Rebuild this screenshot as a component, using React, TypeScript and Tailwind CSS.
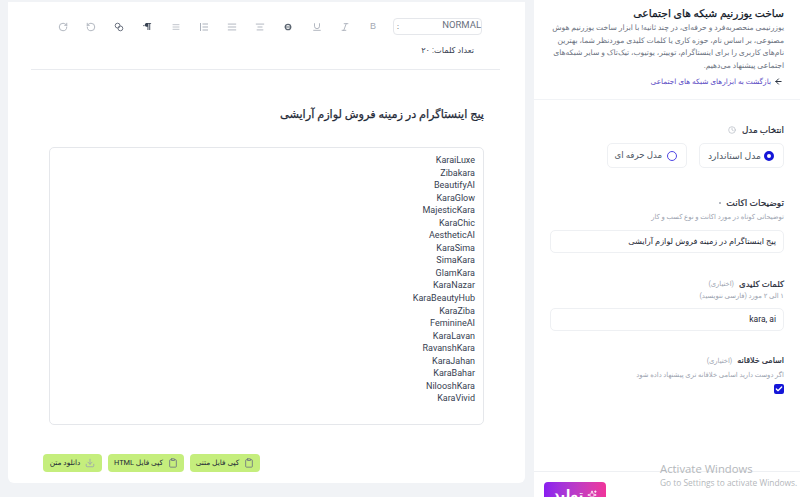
import React from "react";
import { ArrowLeft, Check, Clipboard, Download, Italic, AlignJustify, AlignCenter, RotateCcw, RotateCw, Sparkles, Underline, Clock } from "lucide-react";

const names = ["KaraiLuxe","Zibakara","BeautifyAI","KaraGlow","MajesticKara","KaraChic","AestheticAI","KaraSima","SimaKara","GlamKara","KaraNazar","KaraBeautyHub","KaraZiba","FeminineAI","KaraLavan","RavanshKara","KaraJahan","KaraBahar","NilooshKara","KaraVivid"];

function Tool({ children }: { children: React.ReactNode }) {
  return <span className="flex h-4 w-[28.2px] items-center justify-center text-[#a3a9b4]">{children}</span>;
}

function ActionBtn({ icon, label, w }: { icon: React.ReactNode; label: string; w: string }) {
  return (
    <button className={`flex h-[18px] items-center justify-center gap-[5px] rounded-[4px] bg-[#c5ee7d] text-[7.4px] text-[#1f2937] ${w}`}>
      {icon}
      <span>{label}</span>
    </button>
  );
}

export default function App() {
  return (
    <div dir="rtl" className="relative flex h-[497px] w-[800px] gap-[9px] overflow-hidden bg-[#f1f3f6] font-['Roboto','DejaVu_Sans',sans-serif] text-[#1f2937]">
      <aside className="flex h-[497px] w-[266px] shrink-0 flex-col bg-white">
        <div className="h-[100px] shrink-0 border-b border-[#f1f3f6] px-4 pt-[7px]">
          <h1 className="text-[10.7px] leading-[14px] text-[#111827] [-webkit-text-stroke:0.25px]">ساخت یوزرنیم شبکه های اجتماعی</h1>
          <p className="mt-[1px] text-[7.6px] leading-[12.5px] text-[#6b7280]">یوزرنیمی منحصربه‌فرد و حرفه‌ای، در چند ثانیه! با ابزار ساخت یوزرنیم هوش مصنوعی، بر اساس نام، حوزه کاری یا کلمات کلیدی موردنظر شما، بهترین نام‌های کاربری را برای اینستاگرام، توییتر، یوتیوب، تیک‌تاک و سایر شبکه‌های اجتماعی پیشنهاد می‌دهیم.</p>
          <div className="mt-[4px] flex items-center gap-[3px] pr-[1px] text-[7.4px] text-[#5b4bc4]">
            <ArrowLeft className="h-[9px] w-[9px] text-[#1f2937]" strokeWidth={2.5} />
            <span>بازگشت به ابزارهای شبکه های اجتماعی</span>
          </div>
        </div>

        <div className="flex-1 px-4 pt-[24px]">
          <div className="flex items-center gap-[6px] text-[8.8px] leading-[12px] [-webkit-text-stroke:0.2px]">
            <span>انتخاب مدل</span>
            <Clock className="h-[8px] w-[8px] text-[#b4b9c2]" />
          </div>
          <div className="mt-[7px] flex gap-[12px]">
            <div className="flex h-[25px] w-[85px] items-center gap-[3px] rounded-[5px] border border-[#eef0f3] pr-[9px] text-[9.2px] text-[#4b5563]">
              <span className="h-[10px] w-[10px] rounded-full border-[3px] border-[#1416d8] bg-white" />
              <span>مدل استاندارد</span>
            </div>
            <div className="flex h-[25px] w-[80px] items-center gap-[5px] rounded-[5px] border border-[#eef0f3] pr-[9px] text-[8.6px] text-[#4b5563]">
              <span className="h-[10px] w-[10px] rounded-full border border-[#4f46e5] bg-white" />
              <span>مدل حرفه ای</span>
            </div>
          </div>

          <div className="mt-[29px] flex items-center gap-[5px] text-[9px] leading-[12px] [-webkit-text-stroke:0.2px]">
            <span>توضیحات اکانت</span>
            <span className="h-[2px] w-[2px] rounded-full bg-[#9ca3af]" />
          </div>
          <p className="mt-[3px] text-[6.8px] leading-[11px] text-[#9ca3af]">توضیحاتی کوتاه در مورد اکانت و نوع کسب و کار</p>
          <div className="mt-[7px] flex h-[23px] items-center rounded-[5px] border border-[#eef0f3] pr-[7px] text-[8.2px]">پیج اینستاگرام در زمینه فروش لوازم آرایشی</div>

          <div className="mt-[25px] flex items-center gap-[5px] leading-[12px]">
            <span className="text-[8.5px] [-webkit-text-stroke:0.2px]">کلمات کلیدی</span>
            <span className="text-[6.8px] text-[#9ca3af]">(اختیاری)</span>
          </div>
          <p className="mt-[1px] text-[6.8px] leading-[11px] text-[#9ca3af]">۱ الی ۲ مورد (فارسی ننویسید)</p>
          <div className="mt-[6px] flex h-[23px] items-center rounded-[5px] border border-[#eef0f3] pr-[7px] text-[8.5px]">kara, ai</div>

          <div className="mt-[24px] flex items-center gap-[5px] leading-[12px]">
            <span className="text-[8px] [-webkit-text-stroke:0.2px]">اسامی خلاقانه</span>
            <span className="text-[6.8px] text-[#9ca3af]">(اختیاری)</span>
          </div>
          <p className="mt-[3px] text-[6.8px] leading-[11px] text-[#9ca3af]">اگر دوست دارید اسامی خلاقانه تری پیشنهاد داده شود</p>
          <span className="mt-[3px] flex h-[10px] w-[10px] items-center justify-center rounded-[2px] bg-[#1416d8]">
            <Check className="h-[8px] w-[8px] text-white" strokeWidth={4} />
          </span>
        </div>

        <div className="flex h-[26px] shrink-0 items-start justify-end border-t border-[#eef0f3] pt-[10px] pl-[10px]">
          <button className="flex h-[26px] w-[62px] items-center justify-center gap-[4px] rounded-[4px] bg-gradient-to-l from-[#f0349a] to-[#8a1cf0] text-[13px] font-bold text-white">
            <Sparkles className="h-[10px] w-[10px]" />
            <span>تولید</span>
          </button>
        </div>
      </aside>

      <main className="mt-[2px] flex h-[481px] w-[517px] shrink-0 flex-col rounded-b-[6px] bg-white pr-[25px] pl-[23px]">
        <div className="border-b border-[#e9ebef] pb-[13px] pt-[16px]">
          <div className="flex items-center pr-[18px]">
            <div className="flex h-[17px] w-[89px] items-start justify-between rounded-[4px] border border-[#e5e7eb] pl-[3px] leading-[12px] text-[#6b7280]" dir="ltr">
              <span className="self-end pb-[1px] text-[8px] text-[#374151]">:</span>
              <span className="text-[9.5px]">NORMAL</span>
            </div>
            <div className="mr-[6px] flex flex-1 items-center">
              <Tool><span className="font-['Liberation_Sans'] text-[9px]">B</span></Tool>
              <Tool><Italic className="h-[10px] w-[10px]" /></Tool>
              <Tool><Underline className="h-[10px] w-[10px]" /></Tool>
              <Tool>
                <svg viewBox="0 0 10 10" className="h-[8px] w-[8px] text-[#5b6470]" fill="none" stroke="currentColor">
                  <circle cx="5" cy="5" r="3.4" strokeWidth="1.6" />
                  <path d="M1 5h8" strokeWidth="1.2" />
                </svg>
              </Tool>
              <Tool><AlignCenter className="h-[10px] w-[10px]" /></Tool>
              <Tool><AlignJustify className="h-[10px] w-[10px]" /></Tool>
              <Tool>
                <svg viewBox="0 0 10 10" className="h-[10px] w-[10px]" fill="none" stroke="currentColor" strokeWidth="0.9">
                  <path d="M1.5 1v8M3.5 2h5.5M3.5 5h5.5M3.5 8h5.5" />
                </svg>
              </Tool>
              <Tool><AlignJustify className="h-[8px] w-[8px]" /></Tool>
              <Tool>
                <svg viewBox="0 0 10 10" className="h-[9px] w-[9px] text-[#374151]" fill="currentColor">
                  <circle cx="1" cy="4" r="0.8" />
                  <path d="M3.5 1h5.5v1H8v7H7V2H6v7H5V5.2A2.2 2.2 0 0 1 3.5 1z" />
                </svg>
              </Tool>
              <Tool>
                <svg viewBox="0 0 10 10" className="h-[10px] w-[10px] text-[#6b7280]" fill="none" stroke="currentColor" strokeWidth="1">
                  <circle cx="3.6" cy="3.6" r="2.4" />
                  <circle cx="6.4" cy="6.4" r="2.4" />
                </svg>
              </Tool>
              <Tool><RotateCcw className="h-[10px] w-[10px]" /></Tool>
              <Tool><RotateCw className="h-[10px] w-[10px]" /></Tool>
            </div>
          </div>
          <div className="mt-[9px] pr-[26px] text-[8.2px] leading-[12px] text-[#374151]">تعداد کلمات: ۲۰</div>
        </div>

        <h2 className="mt-[36px] mr-[16px] text-[11.3px] leading-[18px] text-[#1f2937] [-webkit-text-stroke:0.25px]">پیج اینستاگرام در زمینه فروش لوازم آرایشی</h2>

        <div className="mt-[23px] mr-[16px] ml-[18px] h-[278px] rounded-[5px] border border-[#e5e7eb] pt-[6px] pr-[8px] text-[9px] leading-[12.55px] text-[#374151]">
          {names.map((n) => <div key={n} dir="ltr" className="text-right">{n}</div>)}
        </div>

        <div className="mt-[29px] ml-[12px] flex justify-end">
          <div className="flex gap-[6px]">
            <ActionBtn w="w-[70px]" icon={<Clipboard className="h-[10px] w-[10px] text-[#6b7280]" />} label="کپی فایل متنی" />
            <ActionBtn w="w-[76px]" icon={<Clipboard className="h-[10px] w-[10px] text-[#6b7280]" />} label="کپی فایل HTML" />
            <ActionBtn w="w-[59px]" icon={<Download className="h-[10px] w-[10px] text-[#9ca3af]" />} label="دانلود متن" />
          </div>
        </div>
      </main>

      <div dir="ltr" className="absolute top-[461px] left-[660px] font-['Open_Sans',sans-serif] text-[#b4b7bb]">
        <div className="text-[11.3px] leading-[15px]">Activate Windows</div>
        <div className="text-[8.4px] leading-[13px] whitespace-nowrap">Go to Settings to activate Windows.</div>
      </div>
    </div>
  );
}
